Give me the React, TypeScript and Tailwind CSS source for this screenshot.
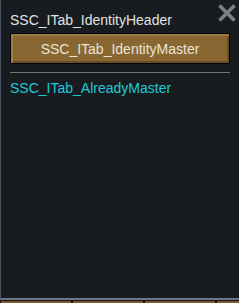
import React from "react";

export default function App() {
  return (
    <div
      className="w-[239px] h-[303px] flex flex-col bg-[#121418] overflow-hidden"
      style={{ fontFamily: '"Liberation Sans", Arial, sans-serif' }}
    >
      <div className="h-[300px] flex flex-col bg-[#181b20] border-l border-l-[#4a5465] border-b-2 border-b-[#6b7687]">
        <div className="flex items-start pl-[9px] pr-[3px] pt-[4px]">
          <div className="mt-[8px] text-[14px] leading-[16px] text-[#e2e2e2] whitespace-nowrap">
            SSC_ITab_IdentityHeader
          </div>
          <svg width="18" height="18" viewBox="0 0 18 18" className="ml-auto">
            <path d="M1.5 1.5 L16.5 16.5 M16.5 1.5 L1.5 16.5" stroke="#7f8082" strokeWidth="3.6" fill="none" />
          </svg>
        </div>
        <div className="mx-[9px] mt-[5px] h-[31px] border border-black bg-black">
          <div className="h-full bg-[#886732] shadow-[inset_2px_2px_0_#9d7d45,inset_-2px_-2px_0_#684d23] flex items-center justify-center text-[14px] leading-[16px] text-[#ebe4d6] whitespace-nowrap">
            SSC_ITab_IdentityMaster
          </div>
        </div>
        <div className="mx-[9px] mt-[8px] h-px bg-[#727272]" />
        <div className="pl-[9px] mt-[7px] text-[14px] leading-[16px] text-[#1fcad6] whitespace-nowrap">
          SSC_ITab_AlreadyMaster
        </div>
      </div>
      <div className="mt-[1px] flex-1 flex gap-[2px] pl-[1px]">
        <div className="w-[70px] bg-[#7a5b2b]" />
        <div className="w-[70px] bg-[#7a5b2b]" />
        <div className="w-[70px] bg-[#7a5b2b]" />
        <div className="flex-1 bg-[#7a5b2b]" />
      </div>
    </div>
  );
}
